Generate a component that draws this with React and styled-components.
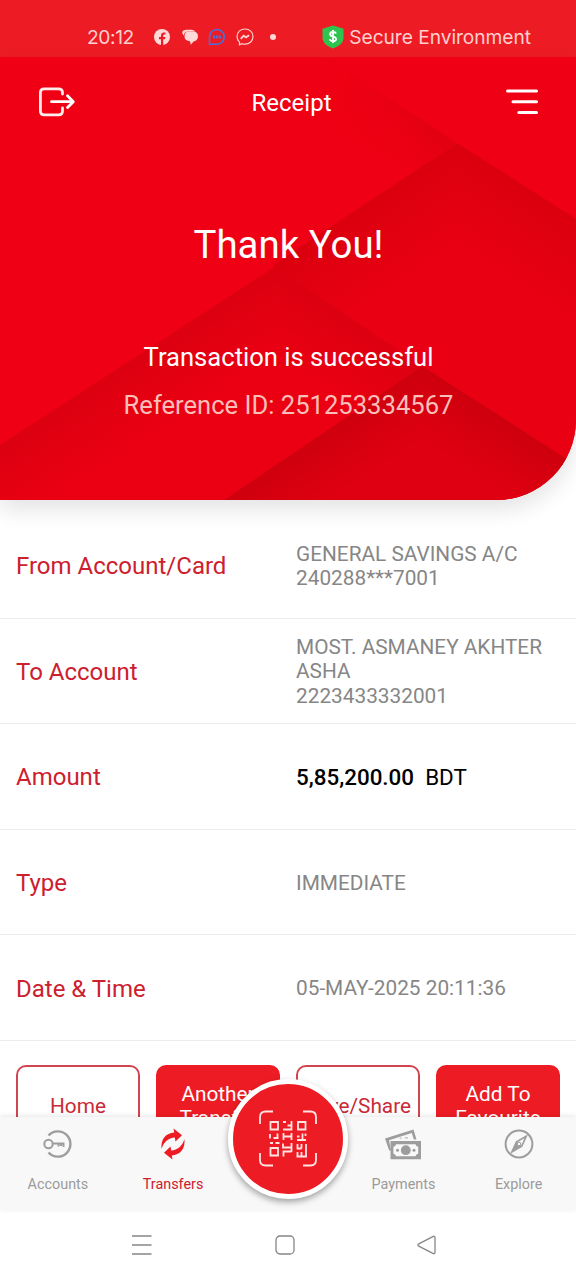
import React from "react"
import styled, { createGlobalStyle } from "styled-components"

const GlobalStyle = createGlobalStyle`
  body {
    margin: 0;
    background: #fff;
    font-family: Roboto, "Liberation Sans", sans-serif;
  }
  * {
    box-sizing: border-box;
  }
`

const Screen = styled.div`
  display: flex;
  flex-direction: column;
  width: 576px;
  height: 1280px;
  overflow: hidden;
  background: #fff;
`

const StatusBar = styled.div`
  display: flex;
  align-items: center;
  flex: none;
  height: 57px;
  padding: 17px 45px 0 87px;
  background: #ed1c24;
  color: #ffd0cf;
  font-family: Inter, "Noto Sans", sans-serif;
  font-size: 19.2px;
`

const Clock = styled.span`
  width: 67px;
  letter-spacing: -0.4px;
`

const Notifications = styled.div`
  display: flex;
  align-items: center;
  gap: 10px;
  flex-grow: 1;

  svg:nth-child(2) {
    margin-left: 2px;
  }
`

const Dot = styled.span`
  width: 6px;
  height: 6px;
  margin-left: 6px;
  border-radius: 50%;
  background: #ffd9d8;
`

const Secure = styled.div`
  display: flex;
  align-items: center;
  gap: 5px;
  letter-spacing: -0.05px;
  white-space: nowrap;

  svg {
    margin-top: -1px;
  }
`

const Hero = styled.header`
  position: relative;
  flex: none;
  height: 443px;
  border-bottom-right-radius: 80px;
  background: #f00014;
  box-shadow: 0 10px 22px rgba(0, 0, 0, 0.11);
  color: #fff;
  text-align: center;
`

const Pattern = styled.svg`
  position: absolute;
  top: 0;
  left: 0;
  border-bottom-right-radius: 80px;
`

const HeroContent = styled.div`
  position: relative;
  display: flex;
  flex-direction: column;
`

const TopBar = styled.div`
  display: flex;
  align-items: center;
  justify-content: space-between;
  height: 89px;
  padding: 0 37px 0 38px;
`

const PageTitle = styled.h1`
  margin: 3px 0 0 2px;
  font-size: 24px;
  font-weight: 400;
`

const Thanks = styled.h2`
  margin: 76px 0 0 1px;
  font-size: 38.4px;
  line-height: 46px;
  font-weight: 400;
`

const Message = styled.p`
  margin: 74px 0 0 1px;
  font-size: 25.6px;
  line-height: 30px;
`

const Reference = styled.p`
  margin: 18px 0 0 1px;
  font-size: 25.6px;
  line-height: 30px;
  color: #fbbfb9;
`

const Details = styled.dl`
  flex: none;
  margin: 0;
  padding-top: 13px;
`

const Row = styled.div`
  display: flex;
  align-items: center;
  height: 105.6px;
  padding: 2px 16px 0;
  border-bottom: 1.6px solid #ececec;
`

const Label = styled.dt`
  width: 280px;
  color: #cd202e;
  font-size: 24px;
`

const Value = styled.dd`
  flex: 1;
  margin: 0;
  color: #868686;
  font-size: 20.8px;
  line-height: 24.8px;
`

const Amount = styled.dd`
  margin: 0;
  color: #000;
  font-size: 22.4px;
  white-space: pre;

  strong {
    font-weight: 500;
  }
`

const Actions = styled.div`
  display: flex;
  gap: 16px;
  flex: none;
  height: 76px;
  padding: 24px 16px 0;
  overflow: hidden;
`

const ActionButton = styled.button`
  flex: 1 0 0;
  height: 83px;
  padding: 0 4px;
  border: 2px solid ${props => (props.$filled ? "#ed1c24" : "#cf4650")};
  border-radius: 10px;
  background: ${props => (props.$filled ? "#ed1c24" : "#fff")};
  color: ${props => (props.$filled ? "#fff" : "#c92a36")};
  font-family: inherit;
  font-size: 20.8px;
  line-height: 24.6px;
`

const TabBar = styled.nav`
  position: relative;
  display: grid;
  grid-template-columns: repeat(5, 1fr);
  flex: none;
  height: 93px;
  background: #f8f8f8;
  box-shadow: 0 -1px 5px rgba(0, 0, 0, 0.1);
`

const Tab = styled.div`
  display: flex;
  flex-direction: column;
  align-items: center;
  padding: 9px 0 0 0.6px;
  color: ${props => (props.$active ? "#cd202e" : "#9b9b9b")};
  font-size: 14.4px;

  svg {
    height: 36px;
  }

  span {
    margin-top: 14px;
    line-height: 17px;
  }
`

const ScanButton = styled.div`
  position: absolute;
  top: -38px;
  left: 228px;
  display: flex;
  align-items: center;
  justify-content: center;
  width: 120px;
  height: 120px;
  border: 5px solid #fff;
  border-radius: 50%;
  background: #ed1c24;
  box-shadow: 0 3px 6px rgba(0, 0, 0, 0.35);
`

const SystemNav = styled.div`
  display: flex;
  align-items: center;
  flex: none;
  gap: 122px;
  height: 70px;
  padding-left: 132px;
  background: #fff;
`

const FacebookIcon = () => (
  <svg width="16" height="16" viewBox="0 0 16 16">
    <circle cx="8" cy="8" r="8" fill="#ffd9d8" />
    <path d="M7 16V10.2H5V8h2V6.400C7 4.300 8.200 3.400 9.900 3.400h1.500v2.100h-1c-.9 0-1.200.4-1.200 1.200V8h2.200l-.4 2.200H9.200V16z" fill="#ed1c24" />
  </svg>
)

const ChatIcon = () => (
  <svg width="16" height="16" viewBox="0 0 16 16">
    <path d="M1.800 6.500C-1.500 3 1 .8 4.500.8h4.500c2.500 0 3.500.7 4 1.700H6.500C3.500 2.500 2 4 1.800 6.500z" fill="#ffd9d8" />
    <path d="M7 2.600h4c3 0 5 1.900 5 4.700S14 12.300 11.800 12.300L8.800 15.800 8 12.300C4.500 12.200 2.500 10 2.500 7.300s1.500-4.700 4.500-4.700z" fill="#ffd9d8" />
  </svg>
)

const SmsIcon = () => (
  <svg width="18" height="18" viewBox="0 0 18 18" fill="none" stroke="#4a6fdc" strokeWidth="1.500">
    <path d="M1.500 16.200V9A7.400 7.400 0 1 1 9 16.200z" />
    <path d="M5 9h8" strokeWidth="3" strokeDasharray="2.200 .7" />
  </svg>
)

const MessengerIcon = () => (
  <svg width="18" height="18" viewBox="0 0 18 18" fill="none" stroke="#ffd0cf" strokeWidth="1.200">
    <path d="M9 1C4.400 1 1 4.300 1 8.600c0 2.300 1 4.200 2.500 5.500V16.800l2.300-1.100c1 .3 2 .5 3.200.5 4.600 0 8-3.300 8-7.600S13.600 1 9 1z" />
    <path d="M4.800 10.800l2.800-3.100 2.500 1.700 3-2.100" strokeWidth="2" />
  </svg>
)

const ShieldIcon = () => (
  <svg width="22" height="24" viewBox="0 0 22 24">
    <path d="M11 .5L21.500 3.800v9c0 5-4.500 8.600-10.500 10.700C5 21.400.5 17.800.5 12.800v-9z" fill="#2fc44f" />
    <path d="M14 8.600C13.600 7.400 12.500 7 11 7c-1.800 0-2.900.8-2.900 2.200 0 3.200 6 1.600 6 4.700 0 1.400-1.200 2.200-3.100 2.200-1.700 0-2.900-.6-3.200-2M11 5v13" fill="none" stroke="#fff" strokeWidth="1.800" />
  </svg>
)

const LogoutIcon = () => (
  <svg width="38" height="32" viewBox="0 0 38 32" fill="none" stroke="#ffeceb" strokeWidth="2.800" strokeLinecap="round" strokeLinejoin="round">
    <path d="M24.500 8V6.500Q24.500 2.800 20.500 2.800H6.200Q2.400 2.800 2.400 6.500V25Q2.400 28.900 6.200 28.900H20.500Q24.500 28.900 24.500 25V21.800" />
    <path d="M13.500 15.700H34M29.500 9.800L35.300 15.700L29.500 21.600" stroke="#fff" />
  </svg>
)

const MenuIcon = () => (
  <svg width="34" height="28" viewBox="0 0 34 28" stroke="#fff" strokeWidth="3" strokeLinecap="round">
    <path d="M2.500 3H31.500M8 13.700H31.500M13.800 24.500H31.500" />
  </svg>
)

// a fold is a peak whose two slopes are shaded away from their upper edge
const FoldShade = ({ id, x, y, depth, from, to }) => (
  <>
    {[1, -1].map(side => (
      <linearGradient
        key={side}
        id={`${id}${side === 1 ? "Left" : "Right"}`}
        gradientUnits="userSpaceOnUse"
        x1={x}
        y1={y}
        x2={x + side * depth * 0.545}
        y2={y + depth * 0.838}
      >
        <stop offset="0" stopColor={from} />
        <stop offset="1" stopColor={to} />
      </linearGradient>
    ))}
  </>
)

const HeroPattern = () => (
  <Pattern width="576" height="443" viewBox="0 57 576 443">
    <defs>
      <linearGradient id="strip" gradientUnits="userSpaceOnUse" x1="457" y1="143" x2="428" y2="188">
        <stop offset="0" stopColor="#e10011" />
        <stop offset="1" stopColor="#f00014" />
      </linearGradient>
      <linearGradient id="stripFade" gradientUnits="userSpaceOnUse" x1="345" y1="65" x2="445" y2="130">
        <stop offset="0" stopColor="#f00014" />
        <stop offset="1" stopColor="#f00014" stopOpacity="0" />
      </linearGradient>
      <FoldShade id="foldA" x={457} y={143} depth={95} from="#db000f" to="#ea0013" />
      <FoldShade id="foldB" x={274} y={267} depth={80} from="#dc0010" to="#eb0013" />
      <FoldShade id="foldC" x={422} y={368} depth={60} from="#cf000e" to="#df0011" />
    </defs>
    <path d="M325 57L457 143L345 217L200 200V57z" fill="url(#strip)" />
    <path d="M320 54L457 143L345 217L200 200V57z" fill="url(#stripFade)" />
    <path d="M457.500 143V500H274V264z" fill="url(#foldALeft)" />
    <path d="M457 143L576 219V500H457z" fill="url(#foldARight)" />
    <path d="M274.500 267V500H0V445z" fill="url(#foldBLeft)" />
    <path d="M274 267L422 366V500H274z" fill="url(#foldBRight)" />
    <path d="M422.500 366V500H224z" fill="url(#foldCLeft)" />
    <path d="M422 366L576 465V500H422z" fill="url(#foldCRight)" />
  </Pattern>
)

const KeyIcon = () => (
  <svg width="30" height="36" viewBox="0 0 30 36" fill="none" stroke="#9d9d9d" strokeWidth="2">
    <path d="M5.500 9.500A12.600 12.600 0 1 1 5.500 26.500" strokeWidth="2.400" />
    <circle cx="5.500" cy="18" r="4.200" />
    <path d="M9.700 17.500H20.500V21M15.500 17.500V20.500M18 18V20" />
  </svg>
)

const TransferIcon = () => (
  <svg width="26" height="36" viewBox="0 0 26 36" fill="#ed1c24">
    <path d="M1.600 23C.5 13 6 7 14.200 6.500L13.500 2.500L22 9.300L15.500 15.500L14.800 11.500C8.500 12 3.500 16 1.600 23z" />
    <path d="M24.400 13C25.500 23 20 29 11.800 29.500L12.500 33.500L4 26.700L10.500 20.500L11.200 24.500C17.500 24 22.500 20 24.400 13z" />
  </svg>
)

const MoneyIcon = () => (
  <svg width="38" height="36" viewBox="0 0 38 36" fill="#9d9d9d">
    <path fillRule="evenodd" d="M1 12.500L29.500 3.500L32.500 13.500H29.800L27.800 7L5 14.200L7 24.500H5.200z" />
    <path d="M15 12.500l2-1 1 1zM20 12l3-1 1 1.500z" />
    <path fillRule="evenodd" d="M6.500 15H37V33.300H6.500zM12 18.200a3 3 0 0 1-2.600 2.600v7a3 3 0 0 1 2.600 2.400h19.600a3 3 0 0 1 2.600-2.400v-7a3 3 0 0 1-2.600-2.600z" />
    <circle cx="21.800" cy="24.200" r="4.900" />
    <circle cx="13.500" cy="24.200" r="1.500" />
    <circle cx="30" cy="24.200" r="1.500" />
  </svg>
)

const CompassIcon = () => (
  <svg width="30" height="36" viewBox="0 0 30 36" fill="none" stroke="#9d9d9d" strokeWidth="2">
    <circle cx="15" cy="18" r="13.400" />
    <path d="M22.300 10.200L17.800 20.200L7.800 26L12.500 15.800z" strokeWidth="1.600" />
    <path d="M12.800 15.800L17.600 20.200L8 25.800z" fill="#9d9d9d" stroke="none" />
    <circle cx="15" cy="18" r="1.800" fill="#f8f8f8" strokeWidth="1" />
  </svg>
)

const QrIcon = () => (
  <svg width="60" height="60" viewBox="0 0 60 60" fill="none" stroke="#ffe4e2" strokeWidth="1.800">
    <path d="M2 15V8Q2 2.500 7.500 2.500H15M45 2.500H52.500Q58 2.500 58 8V15M58 44V51Q58 56.500 52.500 56.500H45M15 56.500H7.500Q2 56.500 2 51V44" />
    <path d="M12.500 13h7.500v7.500h-7.500zM40 13h7.500v7.500H40zM12.500 39h7.500v7.500h-7.500z" />
    <path d="M25 13h3M33.500 12v8.500H25M29.500 16.500h4M12 25v4.500M15.500 29h5M19.500 24.500v4.500M12 34h3M17.500 34h4" />
    <path d="M25.500 24v7M33.500 24v7M25.500 27.500h8M25 34.500v4h5M33.500 34v4.500h-5M25.500 47.500v-5h8M33.500 38.500v4.500" />
    <path d="M39 27.500h2.500M39 31h9M44.500 24.500v6.500M47.500 24.500v2.500M39.500 35v4.500h4M43.500 35v4.500M48 35v12.500h-9.500M39.500 43v4.500M43.500 43v4.500" />
  </svg>
)

const tabs = [
  { name: "Accounts", icon: <KeyIcon /> },
  { name: "Transfers", icon: <TransferIcon />, active: true },
  null,
  { name: "Payments", icon: <MoneyIcon /> },
  { name: "Explore", icon: <CompassIcon /> },
]

const App = () => (
  <Screen>
    <GlobalStyle />
    <StatusBar>
      <Clock>20:12</Clock>
      <Notifications>
        <FacebookIcon />
        <ChatIcon />
        <SmsIcon />
        <MessengerIcon />
        <Dot />
      </Notifications>
      <Secure>
        <ShieldIcon />
        Secure Environment
      </Secure>
    </StatusBar>

    <Hero>
      <HeroPattern />
      <HeroContent>
        <TopBar>
          <LogoutIcon />
          <PageTitle>Receipt</PageTitle>
          <MenuIcon />
        </TopBar>
        <Thanks>Thank You!</Thanks>
        <Message>Transaction is successful</Message>
        <Reference>Reference ID: 251253334567</Reference>
      </HeroContent>
    </Hero>

    <Details>
      <Row>
        <Label>From Account/Card</Label>
        <Value>
          GENERAL SAVINGS A/C
          <br />
          240288***7001
        </Value>
      </Row>
      <Row>
        <Label>To Account</Label>
        <Value>
          MOST. ASMANEY AKHTER ASHA
          <br />
          2223433332001
        </Value>
      </Row>
      <Row>
        <Label>Amount</Label>
        <Amount>
          <strong>5,85,200.00</strong>{"  BDT"}
        </Amount>
      </Row>
      <Row>
        <Label>Type</Label>
        <Value>IMMEDIATE</Value>
      </Row>
      <Row>
        <Label>Date &amp; Time</Label>
        <Value>05-MAY-2025 20:11:36</Value>
      </Row>
    </Details>

    <Actions>
      <ActionButton>Home</ActionButton>
      <ActionButton $filled>Another Transfer</ActionButton>
      <ActionButton>Save/Share</ActionButton>
      <ActionButton $filled>Add To Favourite</ActionButton>
    </Actions>

    <TabBar>
      {tabs.map((tab, i) =>
        tab ? (
          <Tab key={tab.name} $active={tab.active}>
            {tab.icon}
            <span>{tab.name}</span>
          </Tab>
        ) : (
          <div key={i} />
        )
      )}
      <ScanButton>
        <QrIcon />
      </ScanButton>
    </TabBar>

    <SystemNav>
      <svg width="21" height="20" viewBox="0 0 21 20" stroke="#868686" strokeWidth="1.500">
        <path d="M0 1H19.500M0 10H19.500M0 19H19.500" />
      </svg>
      <svg width="20" height="20" viewBox="0 0 20 20" fill="none" stroke="#868686" strokeWidth="1.300">
        <rect x="1" y="1" width="18" height="18" rx="4" />
      </svg>
      <svg width="20" height="20" viewBox="0 0 20 20" fill="none" stroke="#868686" strokeWidth="1.300">
        <path d="M16.300 1.300L1.800 8.800Q0 10 1.800 11.200L16.300 18.700Q18 19 18 17.300V2.700Q18 1 16.300 1.300z" />
      </svg>
    </SystemNav>
  </Screen>
)

export default App
